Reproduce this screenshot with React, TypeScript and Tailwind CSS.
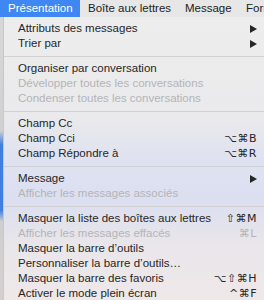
import React from "react";

type Item =
  | { sep: true }
  | { label: string; disabled?: boolean; shortcut?: string; arrow?: boolean };

const items: Item[] = [
  { label: "Attributs des messages", arrow: true },
  { label: "Trier par", arrow: true },
  { sep: true },
  { label: "Organiser par conversation" },
  { label: "Développer toutes les conversations", disabled: true },
  { label: "Condenser toutes les conversations", disabled: true },
  { sep: true },
  { label: "Champ Cc" },
  { label: "Champ Cci", shortcut: "⌥⌘B" },
  { label: "Champ Répondre à", shortcut: "⌥⌘R" },
  { sep: true },
  { label: "Message", arrow: true },
  { label: "Afficher les messages associés", disabled: true },
  { sep: true },
  { label: "Masquer la liste des boîtes aux lettres", shortcut: "⇧⌘M" },
  { label: "Afficher les messages effacés", shortcut: "⌘L", disabled: true },
  { label: "Masquer la barre d’outils" },
  { label: "Personnaliser la barre d’outils…" },
  { label: "Masquer la barre des favoris", shortcut: "⌥⇧⌘H" },
  { label: "Activer le mode plein écran", shortcut: "^⌘F" },
];

export default function App() {
  return (
    <div
      className="w-[264px] h-[300px] overflow-hidden flex flex-col text-[11.5px] leading-none"
      style={{ fontFamily: '"Liberation Sans", Arial, "DejaVu Sans", sans-serif' }}
    >
      <div className="h-[17px] flex items-center bg-[#e7e7e7] text-[#222] shrink-0 whitespace-nowrap">
        <div className="h-full w-[80px] shrink-0 bg-[#3f88f3] text-white flex items-center pl-[8px]">
          Présentation
        </div>
        <div className="w-[97px] shrink-0 pl-[8px]">Boîte aux lettres</div>
        <div className="w-[61px] shrink-0 pl-[8px]">Message</div>
        <div className="shrink-0 pl-[8px]">Format</div>
      </div>
      <div className="flex flex-1">
        <div className="w-[3px] shrink-0 bg-[linear-gradient(to_bottom,#d8d8d8_0%,#d0d0d0_40%,#3f7fe0_45%,#3f7fe0_68%,#cfcfcf_72%,#d6d0d0_100%)]" />
        <div className="flex-1 flex flex-col pt-[4px] bg-[linear-gradient(to_bottom,#ededed_0%,#eaeaec_35%,#dfe2f0_50%,#dcdff0_65%,#e9e6ea_80%,#efe8e9_100%)] border-l border-[#c8c8c8]">
          {items.map((it, i) =>
            "sep" in it ? (
              <div key={i} className="h-[10px] shrink-0 flex items-center">
                <div className="h-px w-full bg-[#d0d0d5]" />
              </div>
            ) : (
              <div
                key={i}
                className={`h-[15px] shrink-0 flex items-center pl-[14px] pr-[7px] whitespace-nowrap ${
                  it.disabled ? "text-[#b4b4b8]" : "text-[#262626]"
                }`}
              >
                <span className="flex-1">{it.label}</span>
                {it.shortcut && (
                  <span className="text-[11px] tracking-[0.5px]" style={{ fontFamily: '"DejaVu Sans", sans-serif' }}>
                    {it.shortcut}
                  </span>
                )}
                {it.arrow && (
                  <svg width="7" height="8" viewBox="0 0 7 8">
                    <path d="M0 0 L7 4 L0 8 Z" fill="#262626" />
                  </svg>
                )}
              </div>
            )
          )}
        </div>
      </div>
    </div>
  );
}
